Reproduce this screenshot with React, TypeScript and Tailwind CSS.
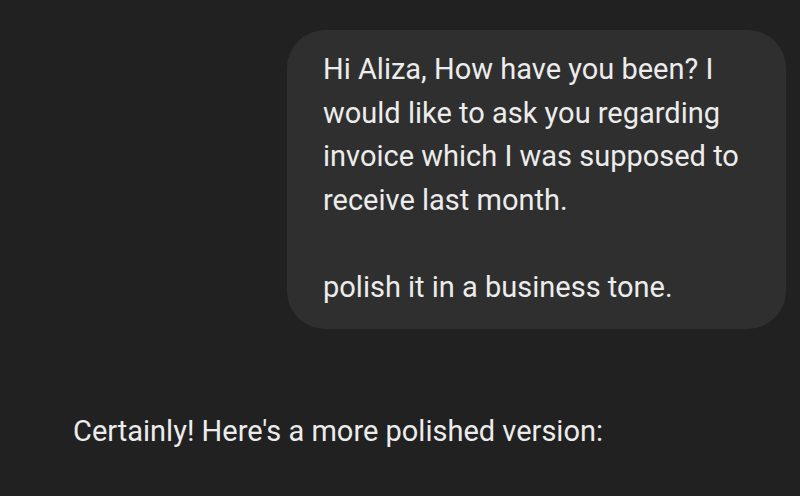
import React from 'react'

const userMessage = `Hi Aliza, How have you been? I would like to ask you regarding invoice which I was supposed to receive last month.

polish it in a business tone.`

export default function App() {
  return (
    <div
      className="w-[800px] h-[496px] overflow-hidden bg-[#212121] text-[#ececec] flex flex-col"
      style={{ fontFamily: 'Roboto, "Noto Sans", sans-serif' }}
    >
      <div className="flex justify-end pt-[30px] pr-[14px]">
        <div className="w-[499px] bg-[#2f2f2f] rounded-[38px] pl-[36px] pr-[30px] pt-[18px] pb-[20px] text-[29px] leading-[43.5px] whitespace-pre-wrap">
          {userMessage}
        </div>
      </div>
      <div className="mt-[81px] pl-[73px] text-[29px] leading-[43.5px]">
        Certainly! Here's a more polished version:
      </div>
    </div>
  )
}
